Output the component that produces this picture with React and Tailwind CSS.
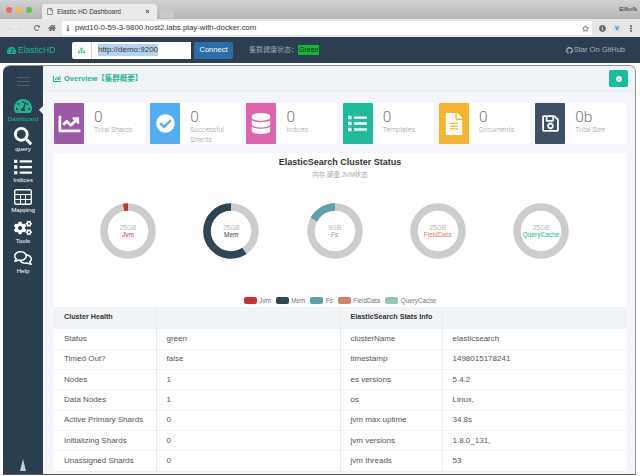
import { FaChartLine, FaCheckCircle, FaDatabase, FaList, FaFileAlt, FaRegSave, FaSearch, FaCogs, FaRegComments, FaTachometerAlt, FaInfoCircle, FaGithub, FaSitemap, FaRegFile, FaTimes, FaRegStar, FaEllipsisV, FaHome, FaRedoAlt, FaInfo, FaChartBar } from 'react-icons/fa';

const cards = [
  { icon: FaChartLine, bg: 'bg-[#9b59a8]', size: 'w-[25px] h-[22px]', value: '0', label: 'Total Shards' },
  { icon: FaCheckCircle, bg: 'bg-[#53adf5]', size: 'w-[19px] h-[19px]', value: '0', label: 'Successful Shards' },
  { icon: FaDatabase, bg: 'bg-[#df62ad]', size: 'w-[20px] h-[21px]', value: '0', label: 'Indices' },
  { icon: FaList, bg: 'bg-[#1fb99c]', size: 'w-[21px] h-[19px]', value: '0', label: 'Templates' },
  { icon: FaFileAlt, bg: 'bg-[#f7b52c]', size: 'w-[18px] h-[22px]', value: '0', label: 'Documents' },
  { icon: FaRegSave, bg: 'bg-[#3f4f66]', size: 'w-[19px] h-[19px]', value: '0b', label: 'Total Size' },
];

function MappingIcon({ className }) {
  return (
    <svg className={className} viewBox="0 0 18 16" fill="none" stroke="currentColor">
      <rect x="0.7" y="0.7" width="16.6" height="14.6" rx="1.5" strokeWidth="1.4" />
      <path d="M1 5.5H17M1 10.5H17M6.5 5V15M11.5 5V15" strokeWidth="1.1" />
    </svg>
  );
}

const nav = [
  { icon: FaTachometerAlt, label: 'Dashboard', active: true },
  { icon: FaSearch, label: 'query' },
  { icon: FaList, label: 'Indices' },
  { icon: MappingIcon, label: 'Mapping' },
  { icon: FaCogs, label: 'Tools' },
  { icon: FaRegComments, label: 'Help' },
];

const donuts = [
  { size: '25GB', name: 'Jvm', color: '#c23531', text: 'text-[#c23531]', pct: 0.03 },
  { size: '25GB', name: 'Mem', color: '#2f4554', text: 'text-[#2f4554]', pct: 0.59 },
  { size: '9GB', name: 'Fs', color: '#61a0a8', text: 'text-[#61a0a8]', pct: 0.17 },
  { size: '25GB', name: 'FieldData', color: '#d48265', text: 'text-[#d48265]', pct: 0 },
  { size: '25GB', name: 'QueryCache', color: '#91c7ae', text: 'text-[#2bb39a]', pct: 0 },
];

const legend = [
  { name: 'Jvm', bg: 'bg-[#c23531]' },
  { name: 'Mem', bg: 'bg-[#2f4554]' },
  { name: 'Fs', bg: 'bg-[#61a0a8]' },
  { name: 'FieldData', bg: 'bg-[#d48265]' },
  { name: 'QueryCache', bg: 'bg-[#91c7ae]' },
];

const rows = [
  ['Status', 'green', 'clusterName', 'elasticsearch'],
  ['Timed Out?', 'false', 'timestamp', '1498015178241'],
  ['Nodes', '1', 'es versions', '5.4.2'],
  ['Data Nodes', '1', 'os', 'Linux,'],
  ['Active Primary Shards', '0', 'jvm max uptime', '34.8s'],
  ['Initializing Shards', '0', 'jvm versions', '1.8.0_131,'],
  ['Unassigned Shards', '0', 'jvm threads', '53'],
];

function Donut({ d }) {
  const r = 24;
  const c = 2 * Math.PI * r;
  return (
    <div className="relative w-[58px] h-[58px]">
      <svg width="58" height="58" viewBox="0 0 58 58">
        <circle cx="29" cy="29" r={r} fill="none" stroke="#cccccc" strokeWidth="7.5" />
        {d.pct > 0 && (
          <circle
            cx="29"
            cy="29"
            r={r}
            fill="none"
            stroke={d.color}
            strokeWidth="7.5"
            strokeDasharray={`${d.pct * c} ${c}`}
            transform="rotate(-90 29 29) scale(1 -1) translate(0 -58)"
          />
        )}
      </svg>
      <div className="absolute inset-0 flex flex-col items-center justify-center text-[6.5px] leading-[7px]">
        <span className="text-[#b5b5b5]">{d.size}</span>
        <span className={d.text}>{d.name}</span>
      </div>
    </div>
  );
}

export default function App() {
  return (
    <div className="w-[640px] h-[476px] overflow-hidden bg-white flex flex-col font-['Liberation_Sans','Noto_Sans_CJK_SC',sans-serif]">
      {/* tab strip */}
      <div className="h-[19px] shrink-0 flex items-end bg-gradient-to-b from-[#d2d2d2] to-[#b4b4b4]">
        <div className="flex gap-[4px] pl-[6px] self-center">
          <span className="w-[6px] h-[6px] rounded-full bg-[#ee6a5f]" />
          <span className="w-[6px] h-[6px] rounded-full bg-[#f5bd4f]" />
          <span className="w-[6px] h-[6px] rounded-full bg-[#61c454]" />
        </div>
        <div className="ml-[10px] w-[115px] h-[15px] bg-[#ebebeb] rounded-t-[3px] flex items-center pl-[5px] pr-[7px] gap-[4px] text-[6.5px] text-[#333]">
          <FaRegFile className="w-[6px] h-[7px] text-[#666]" />
          <span className="flex-1">Elastic HD Dashboard</span>
          <FaTimes className="w-[5px] h-[5px] text-[#666]" />
        </div>
        <div className="ml-[3px] w-[14px] h-[9px] bg-[#c9c9c9] rounded-t-[2px] mb-[1px]" />
        <span className="ml-auto mr-[3px] self-center text-[6px] text-[#333]">Elfkxfk</span>
      </div>
      {/* toolbar */}
      <div className="h-[18px] shrink-0 bg-[#e6e6e6] flex items-center text-[#666]">
        <div className="w-[62px] flex items-center gap-[8px] pl-[7px]">
          <span className="w-[19px] text-[7px] text-[#c4c4c4] tracking-[3px]">←→</span>
          <FaRedoAlt className="w-[6px] h-[6px]" />
          <FaHome className="w-[8px] h-[8px]" />
        </div>
        <div className="w-[530px] h-[14px] bg-white flex items-center px-[3px] gap-[4px] text-[7.8px] text-[#333] rounded-l-[2px]">
          <FaInfo className="w-[6px] h-[6px] text-[#666]" />
          <span className="flex-1">pwd10-0-59-3-9800.host2.labs.play-with-docker.com</span>
          <FaRegStar className="w-[7px] h-[7px] text-[#555]" />
        </div>
        <div className="flex-1 flex items-center justify-end gap-[7px] pr-[6px]">
          <FaInfoCircle className="w-[7px] h-[7px]" />
          <span className="w-[8px] h-[7px] rounded-[2px] bg-[#cfe6f5] text-[6px] leading-[7px] font-bold text-[#2a6db0] text-center">V</span>
          <FaEllipsisV className="w-[6px] h-[7px]" />
        </div>
      </div>
      {/* top nav */}
      <div className="h-[26px] shrink-0 bg-[#2c3e50] flex items-center">
        <div className="w-[72px] pl-[7px] flex items-center gap-[2px] text-[#1fb58f] text-[8.5px]">
          <FaTachometerAlt className="w-[9px] h-[9px]" />
          <span>ElasticHD</span>
        </div>
        <div className="w-[19px] h-[17px] bg-white flex items-center justify-center rounded-l-[2px]">
          <FaSitemap className="w-[7px] h-[7px] text-[#1fb58f]" />
        </div>
        <div className="w-[100px] h-[17px] bg-white border-l border-[#ccd] flex items-center pl-[6px] text-[8px] text-[#333]">
          <span className="bg-[#b4d3f2]">http://demo:9200</span>
        </div>
        <div className="ml-[3px] w-[39px] h-[17px] bg-[#2a6da8] text-white text-[7.5px] font-medium flex items-center justify-center rounded-r-[2px]">
          Connect
        </div>
        <div className="ml-[16px] flex items-center text-[7px] text-[#9aa5b0]">
          <span>集群健康状态：</span>
          <span className="bg-[#18b532] text-[#0b2e1a] px-[1px]">Green</span>
        </div>
        <div className="ml-auto mr-[15px] flex items-center gap-[1px] text-[7.5px] text-[#a9b3bc]">
          <FaGithub className="w-[7px] h-[7px]" />
          <span>Star On GitHub</span>
        </div>
      </div>
      {/* app window */}
      <div className="flex-1 min-h-0 pt-[2px] pl-[3px] pr-[4px] pb-[1px] bg-white">
        <div className="h-full flex bg-[#f4f6fb] rounded-t-[7px] overflow-hidden border-t border-r border-b border-t-[#8f8f8f] border-r-[#8f8f8f] border-b-[#555]">
          <aside className="w-[40px] shrink-0 bg-[#2b3e50] flex flex-col items-center relative">
            <div className="mt-[11px] w-[13px] flex flex-col gap-[3px]">
              <span className="h-px bg-[#4d6172]" />
              <span className="h-px bg-[#4d6172]" />
              <span className="h-px bg-[#4d6172]" />
            </div>
            <div className="mt-[8px] flex flex-col items-center gap-[3px]">
              {nav.map((n) => {
                const Icon = n.icon;
                return (
                  <div key={n.label} className="h-[27.5px] flex flex-col items-center justify-end">
                    <Icon className={`w-[18px] h-[18px] ${n.active ? 'text-[#1fb58f]' : 'text-white'}`} />
                    <span className={`text-[6.2px] leading-[7px] ${n.active ? 'text-[#1fb58f]' : 'text-white'}`}>{n.label}</span>
                  </div>
                );
              })}
            </div>
            <div className="absolute right-0 top-[40px] w-0 h-0 border-y-[4px] border-y-transparent border-r-[4px] border-r-white" />
            <div className="mt-auto mb-[3px] w-0 h-0 border-x-[3px] border-x-transparent border-b-[12px] border-b-[#c5cdd4]" />
          </aside>
          <main className="flex-1 min-w-0 flex flex-col">
            <div className="h-[26px] shrink-0 bg-[#f1f4f7] border-b border-[#e8ecf1] flex items-center pl-[10px] pr-[7px]">
              <FaChartBar className="w-[8px] h-[8px] text-[#1fb58f]" />
              <span className="ml-[3px] text-[7.5px] font-bold text-[#2bb39a]">Overview【集群概要】</span>
              <div className="ml-auto w-[19px] h-[17px] rounded-[2px] bg-[#1abc9c] flex items-center justify-center">
                <FaInfoCircle className="w-[6px] h-[6px] text-white" />
              </div>
            </div>
            <div className="flex-1 min-h-0 pl-[11px] pr-[9px] flex flex-col">
              <div className="mt-[11px] grid grid-cols-6 gap-[5.4px] shrink-0">
                {cards.map((c) => {
                  const Icon = c.icon;
                  return (
                    <div key={c.label} className="h-[41px] bg-white flex">
                      <div className={`w-[30px] shrink-0 ${c.bg} rounded-[1px] flex items-center justify-center`}>
                        <Icon className={`${c.size} text-white`} />
                      </div>
                      <div className="pl-[10px] pt-[5px] min-w-0 font-['Roboto',sans-serif] font-light">
                        <div className="text-[15.5px] leading-[18px] text-[#777]">{c.value}</div>
                        <div className="text-[7px] leading-[9.5px] text-[#999]">{c.label}</div>
                      </div>
                    </div>
                  );
                })}
              </div>
              <section className="mt-[9px] h-[154px] shrink-0 bg-white flex flex-col items-center">
                <h2 className="mt-[3px] text-[9px] leading-[12px] font-bold text-[#333]">ElasticSearch Cluster Status</h2>
                <p className="mt-[2px] text-[6.5px] leading-[9px] text-[#aaa]">内存,硬盘,JVM状态</p>
                <div className="mt-[23px] w-full pl-[45px] flex gap-[45.25px]">
                  {donuts.map((d) => (
                    <Donut key={d.name} d={d} />
                  ))}
                </div>
                <div className="mt-auto mb-[2px] flex items-center gap-[5px] text-[6.3px] text-[#777]">
                  {legend.map((l) => (
                    <div key={l.name} className="flex items-center gap-[2.5px]">
                      <span className={`w-[13px] h-[7px] rounded-[2px] ${l.bg}`} />
                      <span>{l.name}</span>
                    </div>
                  ))}
                </div>
              </section>
              <table className="w-full table-fixed border-collapse text-[8px] text-[#555] bg-white">
                <colgroup>
                  <col className="w-[102px]" />
                  <col className="w-[184px]" />
                  <col className="w-[102px]" />
                  <col className="w-[184px]" />
                </colgroup>
                <thead>
                  <tr className="h-[22px] bg-[#f1f4f7] text-left text-[7.2px] text-[#333]">
                    <th className="pl-[10px] pb-[1px] border-r border-[#e8ebef] font-bold">Cluster Health</th>
                    <th className="border-r border-[#e8ebef]"></th>
                    <th className="pl-[10px] pb-[1px] border-r border-[#e8ebef] font-bold">ElasticSearch Stats Info</th>
                    <th></th>
                  </tr>
                </thead>
                <tbody>
                  {rows.map((r) => (
                    <tr key={r[0]} className="h-[20.3px] border-b border-[#eef0f3]">
                      <td className="pl-[10px] border-r border-[#e8ebef]">{r[0]}</td>
                      <td className="pl-[10px] border-r border-[#e8ebef]">{r[1]}</td>
                      <td className="pl-[10px] border-r border-[#e8ebef]">{r[2]}</td>
                      <td className="pl-[10px]">{r[3]}</td>
                    </tr>
                  ))}
                </tbody>
              </table>
            </div>
          </main>
        </div>
      </div>
    </div>
  );
}
